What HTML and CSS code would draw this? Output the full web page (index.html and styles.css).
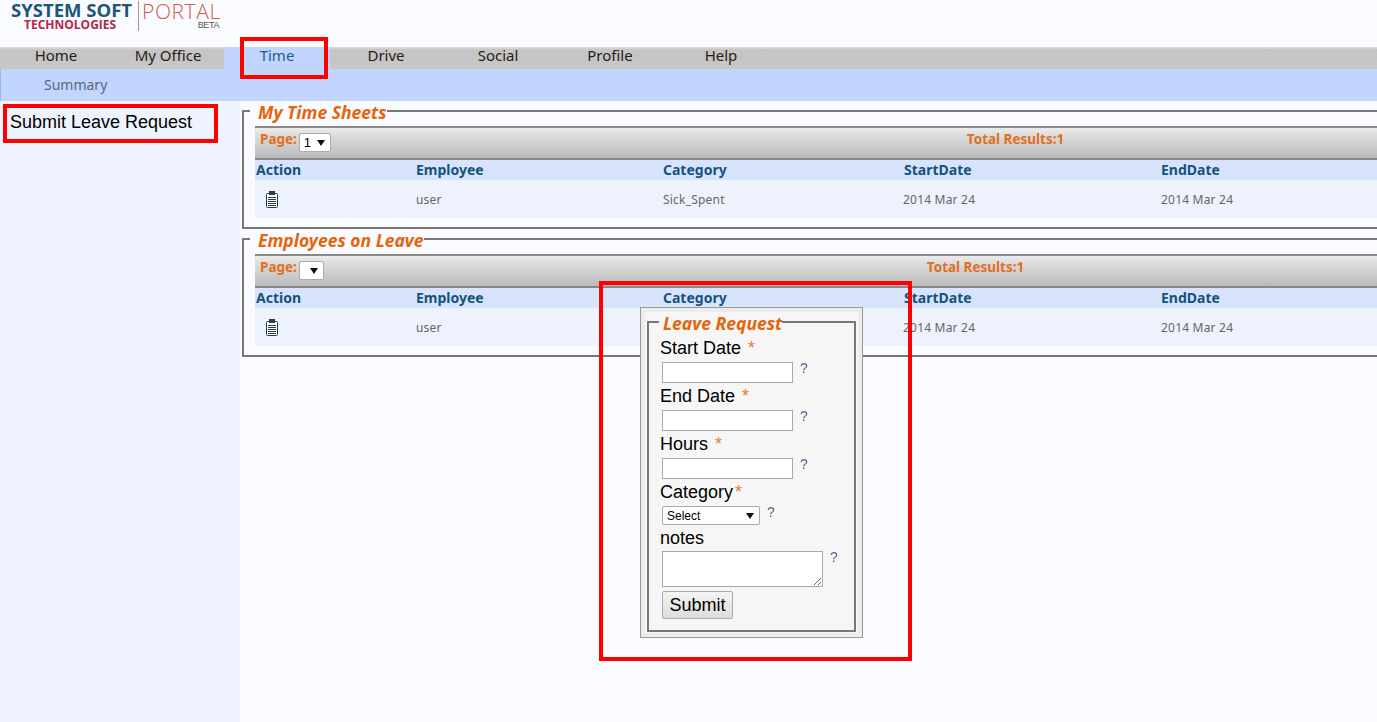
FILE: index.html
```html
<!DOCTYPE html>
<html lang="en">
<head>
<meta charset="utf-8">
<title>Portal</title>
<link rel="stylesheet" href="styles.css">
</head>
<body>
<header class="top">
  <div class="logo">
    <div class="logo-left">
      <div class="logo-name">SYSTEM SOFT</div>
      <div class="logo-tech">TECHNOLOGIES</div>
    </div>
    <div class="logo-right">
      <div class="logo-portal">PORTAL</div>
      <div class="logo-beta">BETA</div>
    </div>
  </div>
</header>
<nav class="nav">
  <a class="nav-item w-home">Home</a>
  <a class="nav-item w-office">My Office</a>
  <a class="nav-item w-time active">Time</a>
  <a class="nav-item w-drive">Drive</a>
  <a class="nav-item w-social">Social</a>
  <a class="nav-item w-profile">Profile</a>
  <a class="nav-item w-help">Help</a>
</nav>
<div class="subnav"><a class="sub-item">Summary</a></div>
<div class="layout">
  <aside class="side"><a class="side-link">Submit Leave Request</a></aside>
  <main class="main">
    <fieldset class="panel">
      <legend class="legend">My Time Sheets</legend>
      <div class="toolbar">
        <span class="tool-label">Page:</span>
        <span class="sel sel-page"><select class="native"><option>1</option></select></span>
        <span class="tool-total t1">Total Results:1</span>
      </div>
      <div class="grid head">
        <div>Action</div><div>Employee</div><div>Category</div><div>StartDate</div><div>EndDate</div>
      </div>
      <div class="grid row">
        <div class="act"><svg class="clip" viewBox="0 0 12 17" width="12" height="17"><use href="#clip"/></svg></div>
        <div>user</div><div>Sick_Spent</div><div>2014 Mar 24</div><div>2014 Mar 24</div>
      </div>
    </fieldset>
    <fieldset class="panel">
      <legend class="legend">Employees on Leave</legend>
      <div class="toolbar">
        <span class="tool-label">Page:</span>
        <span class="sel sel-empty"><select class="native"><option></option></select></span>
        <span class="tool-total t2">Total Results:1</span>
      </div>
      <div class="grid head">
        <div>Action</div><div>Employee</div><div>Category</div><div>StartDate</div><div>EndDate</div>
      </div>
      <div class="grid row">
        <div class="act"><svg class="clip" viewBox="0 0 12 17" width="12" height="17"><use href="#clip"/></svg></div>
        <div>user</div><div></div><div>2014 Mar 24</div><div>2014 Mar 24</div>
      </div>
    </fieldset>
  </main>
</div>

<div class="popup">
  <fieldset class="form-set">
    <legend class="legend form-legend">Leave Request</legend>
    <div class="label label-first">Start Date <span class="req">*</span></div>
    <div class="field"><input class="input" type="text"><span class="help">?</span></div>
    <div class="label">End Date <span class="req">*</span></div>
    <div class="field"><input class="input" type="text"><span class="help">?</span></div>
    <div class="label">Hours <span class="req">*</span></div>
    <div class="field"><input class="input" type="text"><span class="help">?</span></div>
    <div class="label">Category<span class="req">*</span></div>
    <div class="field field-cat"><span class="sel sel-cat"><select class="native"><option>Select</option></select></span><span class="help">?</span></div>
    <div class="label label-notes">notes</div>
    <div class="field field-area"><textarea class="area"></textarea><span class="help">?</span></div>
    <button class="submit" type="button">Submit</button>
  </fieldset>
</div>

<div class="mark mark-time"></div>
<div class="mark mark-side"></div>
<div class="mark mark-form"></div>

<svg class="defs" width="0" height="0" aria-hidden="true">
  <symbol id="clip" viewBox="0 0 12 17">
    <rect x="0.5" y="2.5" width="11" height="14" rx="1" fill="#fff" stroke="#2b3a55"/>
    <rect x="3.5" y="0.5" width="5" height="3" fill="#2b3a55" stroke="#2b3a55"/>
    <path d="M2 6.5h8M2 8.5h8M2 10.5h8M2 12.5h8M2 14.5h8" stroke="#2b3a55" stroke-width="1"/>
  </symbol>
</svg>
</body>
</html>
```
FILE: styles.css
```css
* { box-sizing: border-box; }
html, body { margin: 0; height: 722px; overflow: hidden; }
body { background: #fafbff; font-family: "Liberation Sans", Arial, sans-serif; color: #000; position: relative; }

.top { height: 47px; padding-left: 11px; }
.logo { display: flex; height: 33px; }
.logo-left { width: 127px; }
.logo-name { font: 700 18.5px/18px "Open Sans", sans-serif; color: #1d5679; white-space: nowrap; margin-top: 1px; }
.logo-tech { font: 700 12px/12px "Open Sans", sans-serif; color: #b5264a; margin-left: 13px; }
.logo-right { width: 81px; border-left: 1px solid #999; padding-left: 3px; height: 30px; margin-top: 1px; text-align: right; }
.logo-portal { font: 300 21px/20px "Open Sans", sans-serif; letter-spacing: .6px; color: #d2584e; white-space: nowrap; }
.logo-beta { font: 400 9px/9px "Liberation Sans", sans-serif; letter-spacing: -.4px; color: #555; }

.nav { height: 22px; display: flex; background: linear-gradient(#dedede, #c6c6c6 12%, #c4c4c4 50%, #c9c9c9); font: 15px/17px "Noto Sans", sans-serif; color: #2b1a14; }
.nav-item { display: block; text-align: center; }
.w-home, .w-office, .w-drive, .w-social, .w-profile { width: 112px; }
.w-time { width: 106px; }
.w-help { width: 110px; }
.active { background: #c2d5fe; color: #1f5b94; }

.subnav { height: 32px; background: #c2d5fe; border-left: 1px solid #9db6ea; padding: 7px 0 0 43px; font: 14px/18px "Noto Sans", sans-serif; color: #5c6680; }

.layout { display: flex; height: 621px; }
.side { width: 240px; flex: none; background: #eff3fe; padding: 10px 0 0 10px; font-size: 18px; line-height: 22px; }
.side-link { color: #000; }

.main { flex: 1; min-width: 0; overflow: hidden; padding: 0 0 0 2px; display: flex; flex-direction: column; }
.panel { margin: -2px -30px 0 0; padding: 0 0 0 11px; flex: none; height: 130px; border: 2px solid #777; background: transparent; min-width: 0; }
.panel + .panel { margin-top: -2px; }
.main > .panel:first-child { margin-top: -2px; }
.legend { padding: 4px 0 0 8px; margin-left: -5px; font: italic 700 17.5px/19px "Noto Sans", sans-serif; color: #e5650c; }
.toolbar { height: 34px; border-top: 2px solid #888; border-bottom: 2px solid #8a8a8a; background: linear-gradient(#ececec, #dcdcdc 25%, #bbb); display: flex; align-items: flex-start; padding: 3px 0 0 5px; margin-top: 4px; font: 700 13.5px/16px "Noto Sans", sans-serif; color: #e07020; }
.tool-label { margin-right: 2px; }
.t1 { margin-left: 636px; }
.t2 { margin-left: 603px; }

.sel { display: inline-block; position: relative; background: #fff; border: 1px solid #aaa; border-radius: 2px; height: 19px; }
.sel::after { content: ""; position: absolute; right: 5px; top: 6px; border: 4px solid transparent; border-top: 6px solid #111; border-bottom: 0; }
.native { appearance: none; border: 0; background: transparent; display: block; width: 100%; height: 100%; padding: 0 0 0 4px; font: 13px "Liberation Sans", sans-serif; color: #000; }
.sel-page { width: 32px; margin-top: 2px; }
.sel-empty { width: 25px; margin-top: 2px; }
.sel-cat { width: 98px; height: 19px; }
.sel-cat .native { font-size: 12px; }

.grid { display: grid; }
.head { grid-template-columns: 160px 247px 241px 257px 1fr; height: 20px; background: #d8e4fc; font: 700 14px/20px "Noto Sans", sans-serif; color: #14527f; padding-left: 1px; }
.row { grid-template-columns: 161px 247px 240px 258px 1fr; height: 38px; padding-top: 1px; background: #eef2fd; font: 12px/37px "Noto Sans", sans-serif; letter-spacing: .2px; color: #666; }
.act { padding: 10px 0 0 11px; line-height: 0; }

.popup { position: absolute; left: 640px; top: 307px; width: 223px; height: 331px; background: #f6f6f6; border: 1px solid #999; box-shadow: inset 0 0 0 4px #ececec; padding: 5px 6px 5px; }
.form-set { margin: 0; height: 100%; padding: 0; border: 2px solid #777; min-width: 0; }
.form-legend { margin-left: 10px; padding: 2px 0 0 4px; line-height: 16px; }
.label { font-size: 18px; line-height: 26px; height: 26px; margin-left: 11px; }
.label-first { margin-top: 4px; }
.label-notes { height: 25px; }
.req { color: #e87d2e; margin-left: 2px; }
.field { display: flex; align-items: flex-start; margin-left: 13px; height: 22px; padding-top: 1px; }
.field-cat { height: 20px; }
.field-area { height: 41px; }
.input { width: 131px; height: 21px; border: 1px solid #aaa; background: #fff; padding: 0; }
.area { width: 161px; height: 36px; border: 1px solid #aaa; background: #fff; padding: 0; margin: 0; display: block; }
.help { font-size: 14px; line-height: 14px; margin: -1px 0 0 7px; color: #5a5f8a; background: linear-gradient(#5a5f8a 72%, #c0224a 72%); -webkit-background-clip: text; background-clip: text; -webkit-text-fill-color: transparent; }
.submit { display: block; margin: 0 0 0 13px; width: 71px; height: 28px; font: 18px "Liberation Sans", sans-serif; padding: 0; border: 1px solid #aaa; border-radius: 2px; background: linear-gradient(#f4f4f4, #dcdcdc); color: #000; }

.mark { position: absolute; border: 4px solid #f00; }
.mark-time { left: 240px; top: 37px; width: 88px; height: 42px; }
.mark-side { left: 3px; top: 104px; width: 215px; height: 39px; }
.mark-form { left: 599px; top: 281px; width: 313px; height: 380px; }
.defs { position: absolute; }
```
